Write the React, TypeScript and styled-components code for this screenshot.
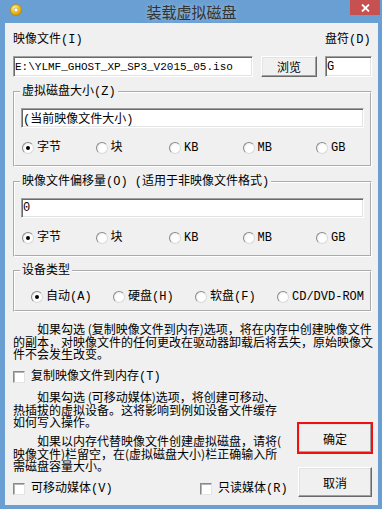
import React from 'react';
import styled, { createGlobalStyle } from 'styled-components';

// -----------------------------------------------------------------------------
// Global
// -----------------------------------------------------------------------------
const GlobalStyle = createGlobalStyle`
  html, body {
    margin: 0;
    padding: 0;
    background: #ffffff;
  }
  body {
    font-family: "Liberation Mono", "Noto Sans CJK SC", monospace;
    font-size: 12px;
    color: #000;
  }
`;

// -----------------------------------------------------------------------------
// Window frame
// -----------------------------------------------------------------------------
const Window = styled.div`
  width: 382px;
  height: 509px;
  box-sizing: border-box;
  background: #6a9fd3;
  padding: 0 4px 4px 5px;
  display: flex;
  flex-direction: column;
`;

const TitleBar = styled.div`
  height: 23px;
  flex: none;
  display: grid;
  grid-template-columns: 1fr auto 1fr;
  align-items: start;
`;

const AppIcon = styled.svg`
  margin: 4px 0 0 5px;
  display: block;
`;

const Title = styled.div`
  font-family: "Noto Sans CJK SC", sans-serif;
  font-size: 15px;
  line-height: 23px;
  color: #333;
  text-shadow: 0 0 6px rgba(255, 255, 255, 0.35);
`;

const CloseButton = styled.div`
  justify-self: end;
  margin-right: -2px;
  width: 30px;
  height: 15px;
  background: #c75050;
  display: grid;
  place-items: center;
`;

const Panel = styled.div`
  flex: 1;
  background: #f0f0f0;
  padding: 11px 6px 0 8px;
  display: flex;
  flex-direction: column;
`;

// -----------------------------------------------------------------------------
// Controls
// -----------------------------------------------------------------------------
const TopGrid = styled.div`
  display: grid;
  grid-template-columns: 1fr 56px 47px;
  column-gap: 8px;
  row-gap: 10px;
  line-height: 12px;
`;

const Field = styled.input<{ $h?: number; $small?: boolean }>`
  box-sizing: border-box;
  width: 100%;
  height: ${(p) => p.$h ?? 21}px;
  margin: 0;
  padding: 0 1px;
  border: 1px solid;
  border-color: #a0a0a0 #ffffff #ffffff #a0a0a0;
  box-shadow: inset 1px 1px 0 #696969, inset -1px -1px 0 #e3e3e3;
  background: #fff;
  font-family: "Liberation Mono", "Noto Sans CJK SC", monospace;
  font-size: ${(p) => (p.$small ? 11 : 12)}px;
  color: #000;
  outline: none;
`;

const Button = styled.button<{ $h: number; $focus?: boolean }>`
  box-sizing: border-box;
  width: 100%;
  height: ${(p) => p.$h}px;
  margin: 0;
  padding: 0;
  border: 1px solid;
  border-color: #ffffff #696969 #696969 #ffffff;
  box-shadow: inset -1px -1px 0 #a0a0a0, inset 1px 1px 0 #e3e3e3;
  background: #f0f0f0;
  font-family: "Noto Sans CJK SC", sans-serif;
  font-size: 12px;
  color: #000;
  outline: ${(p) => (p.$focus ? '2px solid #f01010' : 'none')};
  outline-offset: -1px;
`;

const Group = styled.fieldset<{ $pb: number }>`
  margin: ${(p) => (p.$pb === 7 ? 8 : 9)}px 0 0;
  padding: 0 6px ${(p) => p.$pb}px;
  border: 2px groove #ffffff;
  min-width: 0;
`;

const Legend = styled.legend`
  padding: 0 2px;
  margin-left: -1px;
  line-height: 12px;
  white-space: nowrap;
`;

const GroupField = styled.div`
  margin-top: 10px;
`;

const RadioRow = styled.div<{ $n: number; $w: number; $pl: number; $mt: number }>`
  display: grid;
  grid-template-columns: repeat(${(p) => p.$n}, ${(p) => p.$w}px);
  padding-left: ${(p) => p.$pl}px;
  margin-top: ${(p) => p.$mt}px;
`;

const Option = styled.label`
  display: flex;
  align-items: center;
  gap: 3px;
  line-height: 12px;
  white-space: nowrap;
`;

const RadioDot = styled.span<{ $on?: boolean }>`
  flex: none;
  width: 12px;
  height: 12px;
  box-sizing: border-box;
  border-radius: 50%;
  border: 1px solid;
  border-color: #8a8a8a #dadada #dadada #8a8a8a;
  background: radial-gradient(circle at 60% 60%, #ffffff 40%, #e6e6e6 100%);
  display: grid;
  place-items: center;

  &::after {
    content: '';
    width: 4px;
    height: 4px;
    border-radius: 50%;
    background: ${(p) => (p.$on ? '#000' : 'transparent')};
  }
`;

const CheckBox = styled.span`
  flex: none;
  width: 12px;
  height: 12px;
  box-sizing: border-box;
  border: 1px solid;
  border-color: #8a8a8a #e3e3e3 #e3e3e3 #8a8a8a;
  box-shadow: inset 1px 1px 0 #b4b4b4;
  background: #fff;
`;

const CheckOption = styled(Option)`
  gap: 6px;
`;

const Note = styled.p<{ $mt: number }>`
  margin: ${(p) => p.$mt}px 0 0;
  font-family: "Noto Sans CJK SC", sans-serif;
  line-height: 12.5px;
  text-indent: 24px;
  white-space: nowrap;
`;

const CheckLine = styled.div<{ $mt: number }>`
  margin-top: ${(p) => p.$mt}px;
  display: grid;
  grid-template-columns: 187px auto;
`;

const Lower = styled.div`
  display: flex;
  margin-top: 8px;
`;

const TextColumn = styled.div`
  flex: 1;
  min-width: 0;
`;

const ButtonColumn = styled.div`
  width: 74px;
  display: flex;
  flex-direction: column;
  gap: 14px;
  padding-top: 32px;
`;

// -----------------------------------------------------------------------------
// Pieces
// -----------------------------------------------------------------------------
const Radio = ({ on, label }: { on?: boolean; label: string }) => (
  <Option>
    <RadioDot $on={on} />
    <span>{label}</span>
  </Option>
);

const Check = ({ label }: { label: string }) => (
  <CheckOption>
    <CheckBox />
    <span>{label}</span>
  </CheckOption>
);

const UNITS = ['字节', '块', 'KB', 'MB', 'GB'];

const UnitRadios = () => (
  <RadioRow $n={5} $w={73.5} $pl={1} $mt={14}>
    {UNITS.map((u, i) => (
      <Radio key={u} on={i === 0} label={u} />
    ))}
  </RadioRow>
);

const CdIcon = () => (
  <AppIcon width="12" height="12" viewBox="0 0 12 12">
    <defs>
      <radialGradient id="cdg" cx="40%" cy="35%" r="70%">
        <stop offset="0" stopColor="#fff7b8" />
        <stop offset="0.45" stopColor="#f6cb25" />
        <stop offset="1" stopColor="#c98d00" />
      </radialGradient>
    </defs>
    <circle cx="6" cy="6" r="5.6" fill="url(#cdg)" stroke="#b98200" strokeWidth="0.6" />
    <circle cx="6" cy="6" r="2.1" fill="#eeeeee" stroke="#a38a50" strokeWidth="0.5" />
    <circle cx="6" cy="6" r="0.9" fill="#ffffff" />
  </AppIcon>
);

// -----------------------------------------------------------------------------
// Component
// -----------------------------------------------------------------------------
const App = (): JSX.Element => (
  <>
    <GlobalStyle />
    <Window>
      <TitleBar>
        <CdIcon />
        <Title>装载虚拟磁盘</Title>
        <CloseButton>
          <svg width="9" height="8" viewBox="0 0 9 8">
            <path d="M1 0.5 L8 7.5 M8 0.5 L1 7.5" stroke="#fff" strokeWidth="1.8" />
          </svg>
        </CloseButton>
      </TitleBar>

      <Panel>
        <TopGrid>
          <span>映像文件(I)</span>
          <span />
          <span>盘符(D)</span>
          <Field $small readOnly defaultValue="E:\YLMF_GHOST_XP_SP3_V2015_05.iso" />
          <Button $h={21}>浏览</Button>
          <Field readOnly defaultValue="G" />
        </TopGrid>

        <Group $pb={11}>
          <Legend>虚拟磁盘大小(Z)</Legend>
          <GroupField>
            <Field $h={20} readOnly defaultValue="(当前映像文件大小)" />
          </GroupField>
          <UnitRadios />
        </Group>

        <Group $pb={11}>
          <Legend>映像文件偏移量(O) (适用于非映像文件格式)</Legend>
          <GroupField>
            <Field $h={20} readOnly defaultValue="0" />
          </GroupField>
          <UnitRadios />
        </Group>

        <Group $pb={7}>
          <Legend>设备类型</Legend>
          <RadioRow $n={4} $w={82} $pl={10} $mt={14}>
            <Radio on label="自动(A)" />
            <Radio label="硬盘(H)" />
            <Radio label="软盘(F)" />
            <Radio label="CD/DVD-ROM" />
          </RadioRow>
        </Group>

        <Note $mt={11}>
          如果勾选 (复制映像文件到内存)选项，将在内存中创建映像文件
          <br />
          的副本，对映像文件的任何更改在驱动器卸载后将丢失，原始映像文
          <br />
          件不会发生改变。
        </Note>

        <CheckLine $mt={10.5}>
          <Check label="复制映像文件到内存(T)" />
        </CheckLine>

        <Lower>
          <TextColumn>
            <Note $mt={0}>
              如果勾选 (可移动媒体)选项，将创建可移动、
              <br />
              热插拔的虚拟设备。这将影响到例如设备文件缓存
              <br />
              如何写入操作。
            </Note>
            <Note $mt={6.5}>
              如果以内存代替映像文件创建虚拟磁盘，请将(
              <br />
              映像文件)栏留空，在(虚拟磁盘大小)栏正确输入所
              <br />
              需磁盘容量大小。
            </Note>
            <CheckLine $mt={10.5}>
              <Check label="可移动媒体(V)" />
              <Check label="只读媒体(R)" />
            </CheckLine>
          </TextColumn>
          <ButtonColumn>
            <Button $h={30} $focus>
              确定
            </Button>
            <Button $h={30}>取消</Button>
          </ButtonColumn>
        </Lower>
      </Panel>
    </Window>
  </>
);

export default App;
